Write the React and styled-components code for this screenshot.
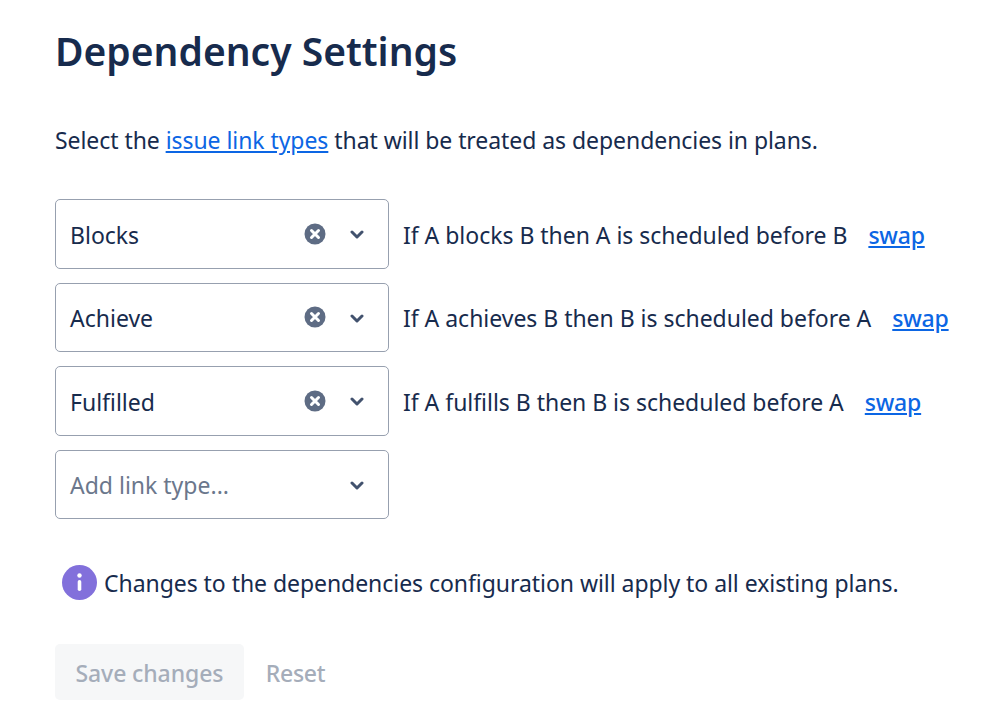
import React from "react";
import styled, { createGlobalStyle } from "styled-components";

const GlobalStyle = createGlobalStyle`
  html, body {
    margin: 0;
    background: #fff;
  }
  body {
    font-family: "Noto Sans", "Open Sans", sans-serif;
    color: #172b4d;
  }
`;

const Page = styled.div`
  width: 998px;
  height: 722px;
  box-sizing: border-box;
  padding: 24px 0 0 55px;
  overflow: hidden;
`;

const Title = styled.h1`
  margin: 0;
  font-size: 39px;
  line-height: 54px;
  font-weight: 600;
  color: #172b4d;
`;

const Intro = styled.p`
  margin: 44px 0 0;
  font-size: 23px;
  line-height: 36px;
  letter-spacing: -0.06px;
`;

const Link = styled.a`
  color: #0c66e4;
  text-decoration: underline;
  font-weight: ${(p) => (p.$bold ? 500 : 400)};
`;

const Rows = styled.div`
  margin-top: 41px;
  display: flex;
  flex-direction: column;
  gap: 14px;
`;

const Row = styled.div`
  display: flex;
  align-items: center;
  gap: 14px;
  font-size: 23px;
`;

const Select = styled.div`
  width: 334px;
  height: 69.5px;
  box-sizing: border-box;
  padding: 0 24px 0 14px;
  display: flex;
  align-items: center;
  border: 1.5px solid #97a0af;
  border-radius: 5px;
  background: #fff;
`;

const SelectValue = styled.span`
  flex: 1;
  padding-top: 2px;
  color: ${(p) => (p.$placeholder ? "#6b778c" : "#172b4d")};
`;

const ClearButton = styled.svg`
  width: 22px;
  height: 22px;
  margin-right: 24px;
  display: block;
`;

const Chevron = styled.svg`
  width: 14px;
  height: 9px;
  margin-top: 2px;
  display: block;
`;

const RuleText = styled.span`
  white-space: nowrap;
  padding-top: 2px;
  letter-spacing: -0.025px;
`;

const Swap = styled(Link)`
  margin-left: 7px;
  padding-top: 2px;
  letter-spacing: -0.2px;
`;

const Notice = styled.div`
  margin: 46px 0 0 7px;
  display: flex;
  align-items: center;
  gap: 7px;
  font-size: 23px;
  letter-spacing: -0.05px;
`;

const InfoIcon = styled.svg`
  width: 35px;
  height: 35px;
  display: block;
`;

const Actions = styled.div`
  margin-top: 44px;
  display: flex;
  align-items: center;
  gap: 22px;
`;

const Button = styled.button`
  height: 56px;
  padding: 2px ${(p) => (p.$subtle ? "0" : "20.5px")} 0;
  border: none;
  border-radius: 5px;
  background: ${(p) => (p.$subtle ? "transparent" : "#f6f7f8")};
  color: #a5adba;
  font: 500 23px "Noto Sans", sans-serif;
  letter-spacing: ${(p) => (p.$subtle ? "-0.3px" : "-0.1px")};
`;

const rules = [
  { label: "Blocks", text: "If A blocks B then A is scheduled before B" },
  { label: "Achieve", text: "If A achieves B then B is scheduled before A" },
  { label: "Fulfilled", text: "If A fulfills B then B is scheduled before A" },
];

const Clear = () => (
  <ClearButton viewBox="0 0 22 22">
    <circle cx="11" cy="11" r="10.5" fill="#5e6c84" />
    <path d="M7.5 7.5l7 7M14.5 7.5l-7 7" stroke="#fff" strokeWidth="3" strokeLinecap="round" />
  </ClearButton>
);

const Caret = () => (
  <Chevron viewBox="0 0 14 9">
    <path d="M2 2l5 5 5-5" fill="none" stroke="#42526e" strokeWidth="3" strokeLinecap="round" strokeLinejoin="round" />
  </Chevron>
);

const App = () => (
  <Page>
    <GlobalStyle />
    <Title>Dependency Settings</Title>
    <Intro>
      Select the <Link href="#">issue link types</Link> that will be treated as dependencies in plans.
    </Intro>
    <Rows>
      {rules.map((rule) => (
        <Row key={rule.label}>
          <Select>
            <SelectValue>{rule.label}</SelectValue>
            <Clear />
            <Caret />
          </Select>
          <RuleText>{rule.text}</RuleText>
          <Swap href="#" $bold>swap</Swap>
        </Row>
      ))}
      <Row>
        <Select>
          <SelectValue $placeholder>Add link type...</SelectValue>
          <Caret />
        </Select>
      </Row>
    </Rows>
    <Notice>
      <InfoIcon viewBox="0 0 35 35">
        <circle cx="17.5" cy="17.5" r="17.5" fill="#8270db" />
        <circle cx="17.5" cy="10.5" r="2.2" fill="#fff" />
        <rect x="15.7" y="15" width="3.6" height="11" rx="1.8" fill="#fff" />
      </InfoIcon>
      Changes to the dependencies configuration will apply to all existing plans.
    </Notice>
    <Actions>
      <Button disabled>Save changes</Button>
      <Button $subtle disabled>Reset</Button>
    </Actions>
  </Page>
);

export default App;
